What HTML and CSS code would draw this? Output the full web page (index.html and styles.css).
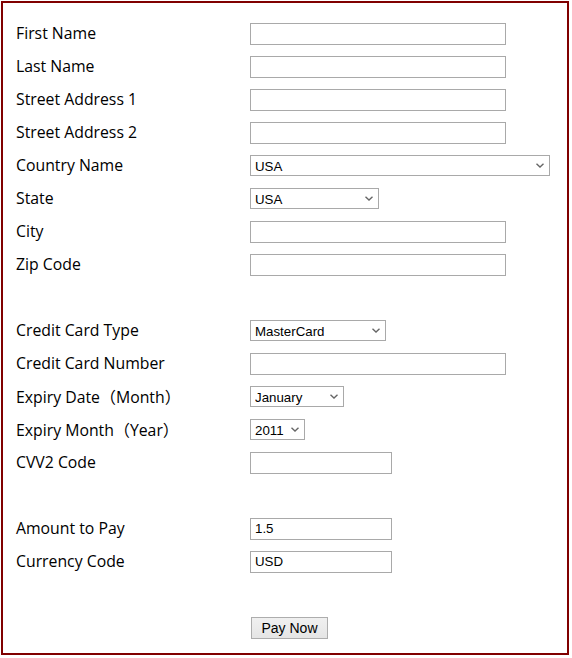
FILE: index.html
```html
<!DOCTYPE html>
<html>
<head>
<meta charset="utf-8">
<link rel="stylesheet" href="styles.css">
</head>
<body>
<form class="box">
  <div class="row"><label class="lbl">First Name</label><input class="txt w256" type="text"></div>
  <div class="row"><label class="lbl">Last Name</label><input class="txt w256" type="text"></div>
  <div class="row"><label class="lbl">Street Address 1</label><input class="txt w256" type="text"></div>
  <div class="row"><label class="lbl">Street Address 2</label><input class="txt w256" type="text"></div>
  <div class="row"><label class="lbl">Country Name</label><select class="sel w300"><option>USA</option></select></div>
  <div class="row"><label class="lbl">State</label><select class="sel w129"><option>USA</option></select></div>
  <div class="row"><label class="lbl">City</label><input class="txt w256" type="text"></div>
  <div class="row"><label class="lbl">Zip Code</label><input class="txt w256" type="text"></div>
  <div class="row"></div>
  <div class="row"><label class="lbl">Credit Card Type</label><select class="sel w136"><option>MasterCard</option></select></div>
  <div class="row"><label class="lbl">Credit Card Number</label><input class="txt w256" type="text"></div>
  <div class="row"><label class="lbl">Expiry Date<span class="cjk">（</span>Month<span class="cjk">）</span></label><select class="sel w94"><option>January</option></select></div>
  <div class="row"><label class="lbl">Expiry Month<span class="cjk">（</span>Year<span class="cjk">）</span></label><select class="sel w55"><option>2011</option></select></div>
  <div class="row"><label class="lbl">CVV2 Code</label><input class="txt w142" type="text"></div>
  <div class="row"></div>
  <div class="row"><label class="lbl">Amount to Pay</label><input class="txt w142" type="text" value="1.5"></div>
  <div class="row"><label class="lbl">Currency Code</label><input class="txt w142" type="text" value="USD"></div>
  <div class="row"></div>
  <div class="row"><span class="lbl"></span><button class="btn" type="button">Pay Now</button></div>
</form>
</body>
</html>
```
FILE: styles.css
```css
html, body {
  margin: 0;
  padding: 0;
  background: #ffffff;
}
.box {
  box-sizing: border-box;
  margin: 1px 0 0 1px;
  width: 568px;
  height: 654px;
  border: 2px solid #800000;
  padding: 14px 0 0 13px;
  display: flex;
  flex-direction: column;
}
.row {
  height: 33px;
  display: flex;
  align-items: center;
  flex-shrink: 0;
}
.lbl {
  width: 234px;
  flex-shrink: 0;
  font-family: "Open Sans", "Noto Sans", sans-serif;
  font-size: 15.8px;
  line-height: 20px;
  margin-top: -1px;
  color: #000;
  letter-spacing: 0;
}
.cjk {
  font-family: "Noto Sans CJK JP", "Open Sans", sans-serif;
  font-size: 16px;
}
.txt, .sel {
  box-sizing: border-box;
  height: 22px;
  border: 1px solid #a9a9a9;
  border-radius: 0;
  font-family: "Liberation Sans", Arial, sans-serif;
  font-size: 13.3px;
  color: #000;
  padding: 0 0 0 4px;
  margin: 0;
  background-color: #fff;
  outline: none;
}
.sel {
  height: 21px;
  appearance: none;
  -webkit-appearance: none;
  padding: 1px 0 0 4px;
  background-image: url("data:image/svg+xml;utf8,<svg xmlns='http://www.w3.org/2000/svg' width='8' height='5' viewBox='0 0 8 5'><path d='M0.5 0.8 L4 4 L7.5 0.8' fill='none' stroke='%23666' stroke-width='1.4'/></svg>");
  background-repeat: no-repeat;
  background-position: right 5px center;
  background-size: 8px 5px;
}
.w256 { width: 256px; }
.w300 { width: 300px; }
.w129 { width: 129px; }
.w136 { width: 136px; }
.w94 { width: 94px; }
.w55 { width: 55px; }
.w142 { width: 142px; }
.btn {
  box-sizing: border-box;
  margin-left: 1px;
  width: 77px;
  height: 22px;
  border: 1px solid #adadad;
  border-radius: 0;
  background: linear-gradient(#f0f0f0, #e5e5e5);
  font-family: "Liberation Sans", Arial, sans-serif;
  font-size: 14px;
  color: #000;
  padding: 0;
}
```
